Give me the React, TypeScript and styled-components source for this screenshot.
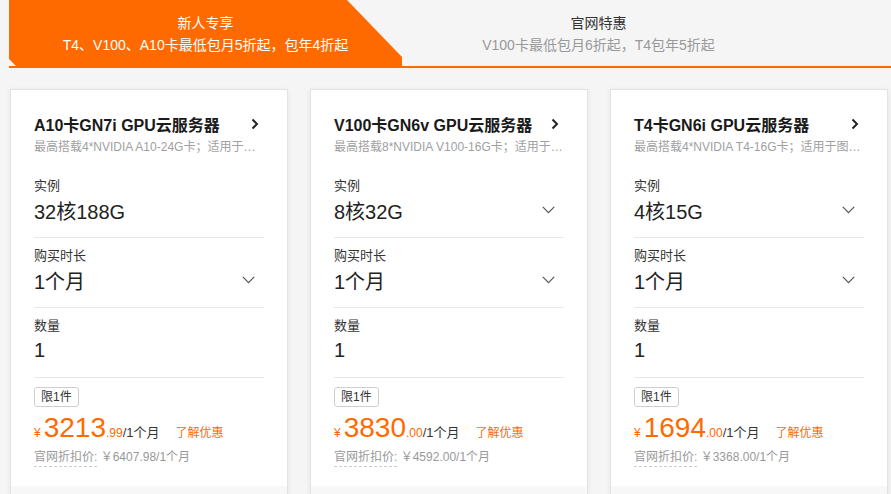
import styled, { createGlobalStyle } from 'styled-components';

const GlobalStyle = createGlobalStyle`
  html, body {
    margin: 0;
    padding: 0;
    overflow: hidden;
    background: #f5f5f5;
    font-family: "Liberation Sans", Arial, "Noto Sans CJK SC", sans-serif;
    color: #333;
  }
  * { box-sizing: border-box; }
`;

const orange = '#ff6a00';

type Product = {
  title: string;
  desc: string;
  spec: string;
  specSelect: boolean;
  price: string;
  cents: string;
  origin: string;
};

const products: Product[] = [
  {
    title: 'A10卡GN7i GPU云服务器',
    desc: '最高搭载4*NVIDIA A10-24G卡；适用于…',
    spec: '32核188G',
    specSelect: false,
    price: '3213',
    cents: '.99',
    origin: '6407.98',
  },
  {
    title: 'V100卡GN6v GPU云服务器',
    desc: '最高搭载8*NVIDIA V100-16G卡；适用于…',
    spec: '8核32G',
    specSelect: true,
    price: '3830',
    cents: '.00',
    origin: '4592.00',
  },
  {
    title: 'T4卡GN6i GPU云服务器',
    desc: '最高搭载4*NVIDIA T4-16G卡；适用于图…',
    spec: '4核15G',
    specSelect: true,
    price: '1694',
    cents: '.00',
    origin: '3368.00',
  },
];

const ArrowRight = () => (
  <svg width="8" height="12" viewBox="0 0 8 12">
    <path d="M1.5 1.5 L6 6 L1.5 10.5" fill="none" stroke="#222" strokeWidth="2" />
  </svg>
);

const ChevronDown = () => (
  <svg width="13" height="8" viewBox="0 0 13 8">
    <path d="M0.8 0.8 L6.5 6.6 L12.2 0.8" fill="none" stroke="#555" strokeWidth="1.2" />
  </svg>
);

export default function App() {
  return (
    <>
      <GlobalStyle />
      <Page>
        <TabBar>
          <ActiveTab>
            <TabTitle>新人专享</TabTitle>
            <TabSub>T4、V100、A10卡最低包月5折起，包年4折起</TabSub>
          </ActiveTab>
          <Tab>
            <TabTitle>官网特惠</TabTitle>
            <TabSub $muted>V100卡最低包月6折起，T4包年5折起</TabSub>
          </Tab>
        </TabBar>

        <CardRow>
          {products.map((p) => (
            <Card key={p.title}>
              <CardBody>
                <TitleRow>
                  <Title>{p.title}</Title>
                  <ArrowRight />
                </TitleRow>
                <Desc>{p.desc}</Desc>

                <Fields>
                  <Field>
                    <Label>实例</Label>
                    <ValueRow>
                      <Value>{p.spec}</Value>
                      {p.specSelect && <ChevronDown />}
                    </ValueRow>
                  </Field>
                  <Field>
                    <Label>购买时长</Label>
                    <ValueRow>
                      <Value>1个月</Value>
                      <ChevronDown />
                    </ValueRow>
                  </Field>
                  <Field>
                    <Label>数量</Label>
                    <ValueRow>
                      <Value>1</Value>
                    </ValueRow>
                  </Field>
                </Fields>

                <Limit>限1件</Limit>
                <PriceRow>
                  <Yen>¥</Yen>
                  <Amount>{p.price}</Amount>
                  <Cents>{p.cents}</Cents>
                  <Unit>/1个月</Unit>
                  <Promo>了解优惠</Promo>
                </PriceRow>
                <Origin>
                  <Dashed>官网折扣价:</Dashed> ￥{p.origin}/1个月
                </Origin>
              </CardBody>
              <CardFooter />
            </Card>
          ))}
        </CardRow>
      </Page>
    </>
  );
}

const Page = styled.div`
  width: 891px;
  padding-left: 9px;
`;

const TabBar = styled.div`
  display: flex;
  height: 68px;
  border-bottom: 2px solid ${orange};
`;

const Tab = styled.div`
  width: 393px;
  height: 66px;
  display: flex;
  flex-direction: column;
  align-items: center;
  padding-top: 13px;
  color: #333;
`;

const ActiveTab = styled(Tab)`
  background: ${orange};
  color: #fff;
  clip-path: polygon(0 0, 338px 0, 100% 57px, 100% 100%, 7px 100%, 0 59px);
`;

const TabTitle = styled.div`
  font-size: 14px;
  line-height: 20px;
`;

const TabSub = styled.div<{ $muted?: boolean }>`
  font-size: 14px;
  line-height: 20px;
  margin-top: 2px;
  color: ${(p) => (p.$muted ? '#999' : 'inherit')};
`;

const CardRow = styled.div`
  display: flex;
  gap: 22px;
  margin-top: 21px;
  padding-left: 1px;
`;

const Card = styled.div`
  width: 278px;
  background: #fff;
  border: 1px solid #e3e3e3;
  box-shadow: 0 1px 5px rgba(0, 0, 0, 0.07);
`;

const CardBody = styled.div`
  padding: 22px 23px 0;
  height: 396px;
`;

const CardFooter = styled.div`
  height: 40px;
  background: #f7f7f7;
`;

const TitleRow = styled.div`
  display: flex;
  align-items: center;
  justify-content: space-between;
  padding-right: 5px;
  height: 24px;
`;

const Title = styled.div`
  font-size: 16px;
  font-weight: bold;
  color: #1a1a1a;
`;

const Desc = styled.div`
  margin-top: 2px;
  font-size: 12px;
  line-height: 18px;
  color: #a0a0a0;
  white-space: nowrap;
`;

const Fields = styled.div`
  margin-top: 12px;
`;

const Field = styled.div`
  padding: 8px 0 13px;
  border-bottom: 1px solid #e8e8e8;
`;

const Label = styled.div`
  font-size: 13px;
  line-height: 20px;
  color: #333;
`;

const ValueRow = styled.div`
  display: flex;
  align-items: center;
  justify-content: space-between;
  height: 28px;
  padding-right: 9px;
`;

const Value = styled.div`
  font-size: 20px;
  color: #222;
`;

const Limit = styled.div`
  display: inline-block;
  margin-top: 9px;
  height: 20px;
  padding: 0 6px;
  border: 1px solid #cfcfcf;
  border-radius: 3px;
  font-size: 12px;
  line-height: 18px;
  color: #333;
`;

const PriceRow = styled.div`
  display: flex;
  align-items: baseline;
  height: 34px;
  margin-top: 5px;
`;

const Yen = styled.span`
  font-size: 12px;
  color: ${orange};
  margin-right: 3px;
`;

const Amount = styled.span`
  font-size: 28px;
  color: ${orange};
`;

const Cents = styled.span`
  font-size: 12px;
  color: ${orange};
`;

const Unit = styled.span`
  font-size: 13px;
  color: #333;
`;

const Promo = styled.span`
  font-size: 12px;
  color: ${orange};
  margin-left: 16px;
`;

const Origin = styled.div`
  margin-top: 2px;
  font-size: 12px;
  line-height: 18px;
  color: #999;
`;

const Dashed = styled.span`
  border-bottom: 1px dashed #ccc;
  padding-bottom: 2px;
`;
